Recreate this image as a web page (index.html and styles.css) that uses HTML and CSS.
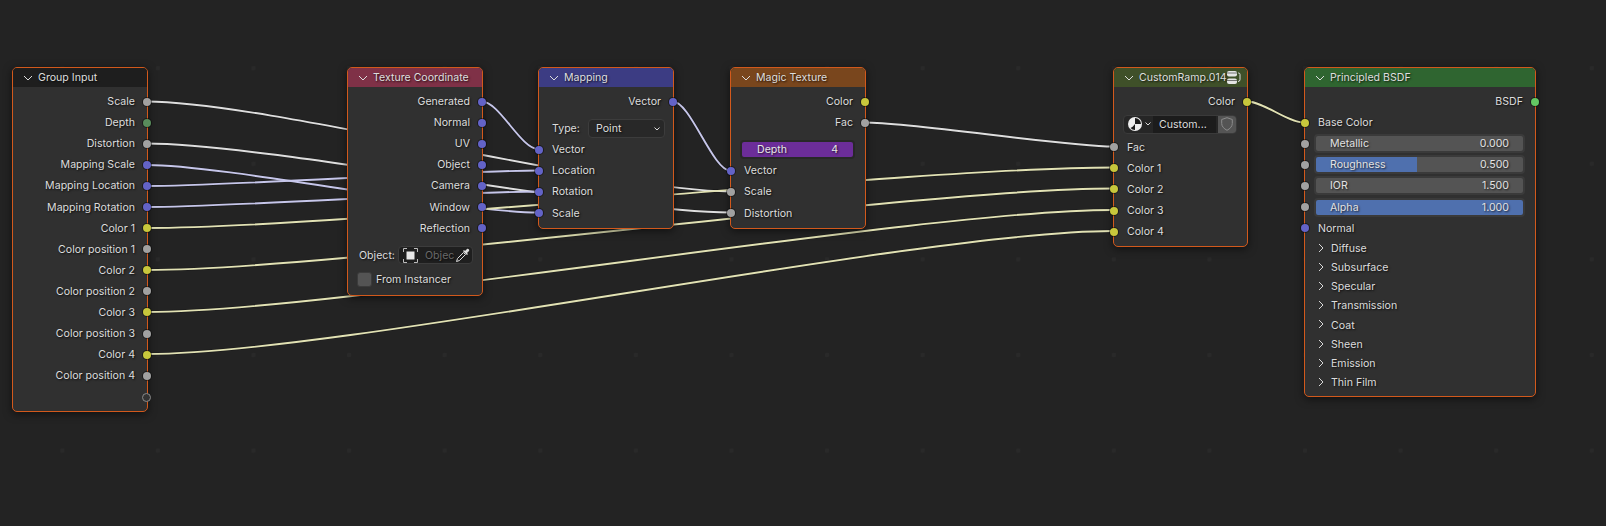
FILE: index.html
```html
<!DOCTYPE html>
<html>
<head>
    <title>Shader Nodes</title>
    <link rel="stylesheet" href="styles.css">
</head>
<body>
<div class="canvas">
    <svg class="wires" width="1606" height="526">
        <defs>
            <g id="wires-grey">
                <path d="M147 101.500C264 101.500 613 191.500 730 191.500"/>
                <path d="M147 143.500C264 143.500 613 212.500 730 212.500"/>
                <path d="M865 122.500C915 122.500 1063 146.500 1113 146.500"/>
            </g>
            <g id="wires-vector">
                <path d="M147 165C225 165 460 212.500 538 212.500"/>
                <path d="M147 186C225 186 460 170.500 538 170.500"/>
                <path d="M147 207C225 207 460 191.500 538 191.500"/>
                <path d="M482 101.500C499 101.500 521 149 538 149"/>
                <path d="M673 101.500C690 101.500 713 170.500 730 170.500"/>
            </g>
            <g id="wires-color">
                <path d="M147 228C340 228 920 167.500 1113 167.500"/>
                <path d="M147 270C340 270 920 188.500 1113 188.500"/>
                <path d="M147 312C340 312 920 210 1113 210"/>
                <path d="M147 354C340 354 920 231 1113 231"/>
                <path d="M1247 101.500C1264 101.500 1287 122.500 1304 122.500"/>
            </g>
        </defs>
        <use href="#wires-grey" class="wire-edge"/>
        <use href="#wires-vector" class="wire-edge"/>
        <use href="#wires-color" class="wire-edge"/>
        <use href="#wires-grey" class="wire wire-grey"/>
        <use href="#wires-vector" class="wire wire-vector"/>
        <use href="#wires-color" class="wire wire-color"/>
    </svg>

    <!-- Group Input -->
    <div class="node node-group">
        <div class="node-head head-group">
            <svg class="chev" width="10" height="6" viewBox="0 0 10 6"><path d="M1 1l4 4 4-4"/></svg>
            <span>Group Input</span>
        </div>
        <div class="node-body">
            <div class="row out">Scale<i class="sock grey"></i></div>
            <div class="row out">Depth<i class="sock green-dim"></i></div>
            <div class="row out">Distortion<i class="sock grey"></i></div>
            <div class="row out">Mapping Scale<i class="sock blue"></i></div>
            <div class="row out">Mapping Location<i class="sock blue"></i></div>
            <div class="row out">Mapping Rotation<i class="sock blue"></i></div>
            <div class="row out">Color 1<i class="sock yellow"></i></div>
            <div class="row out">Color position 1<i class="sock grey"></i></div>
            <div class="row out">Color 2<i class="sock yellow"></i></div>
            <div class="row out">Color position 2<i class="sock grey"></i></div>
            <div class="row out">Color 3<i class="sock yellow"></i></div>
            <div class="row out">Color position 3<i class="sock grey"></i></div>
            <div class="row out">Color 4<i class="sock yellow"></i></div>
            <div class="row out">Color position 4<i class="sock grey"></i></div>
            <div class="row out"><i class="sock empty"></i></div>
        </div>
    </div>

    <!-- Texture Coordinate -->
    <div class="node node-texcoord">
        <div class="node-head head-texcoord">
            <svg class="chev" width="10" height="6" viewBox="0 0 10 6"><path d="M1 1l4 4 4-4"/></svg>
            <span>Texture Coordinate</span>
        </div>
        <div class="node-body">
            <div class="row out">Generated<i class="sock blue"></i></div>
            <div class="row out">Normal<i class="sock blue"></i></div>
            <div class="row out">UV<i class="sock blue"></i></div>
            <div class="row out">Object<i class="sock blue"></i></div>
            <div class="row out">Camera<i class="sock blue"></i></div>
            <div class="row out">Window<i class="sock blue"></i></div>
            <div class="row out">Reflection<i class="sock blue"></i></div>
            <div class="row object-row">
                <span>Object:</span>
                <div class="object-field">
                    <svg class="object-icon" width="15" height="15" viewBox="0 0 15 15">
                        <rect x="3.500" y="3.500" width="8" height="8" fill="#e8e8e8"/>
                        <path d="M.5 4V.5H4M11 .5h3.500V4M14.500 11v3.500H11M4 14.500H.5V11" fill="none" stroke="#bbb"/>
                    </svg>
                    <span class="object-name">Objec</span>
                    <svg class="dropper" width="16" height="16" viewBox="0 0 16 16">
                        <path d="M1.500 14.500l1-3 6-6 2 2-6 6z" fill="none" stroke="#ddd"/>
                        <path d="M8 4l4 4 1-1-1-1 2-2c1-1-1-3-2-2l-2 2-1-1z" fill="#ddd"/>
                    </svg>
                </div>
            </div>
            <div class="row check-row"><i class="check"></i>From Instancer</div>
        </div>
    </div>

    <!-- Mapping -->
    <div class="node node-mapping">
        <div class="node-head head-mapping">
            <svg class="chev" width="10" height="6" viewBox="0 0 10 6"><path d="M1 1l4 4 4-4"/></svg>
            <span>Mapping</span>
        </div>
        <div class="node-body">
            <div class="row out">Vector<i class="sock blue"></i></div>
            <div class="row type-row">
                <span>Type:</span>
                <div class="select">
                    <span>Point</span>
                    <svg class="mini-chev" width="6" height="4" viewBox="0 0 6 4"><path d="M.5 .5L3 3 5.500 .5"/></svg>
                </div>
            </div>
            <div class="row in"><i class="sock blue"></i>Vector</div>
            <div class="row in"><i class="sock blue"></i>Location</div>
            <div class="row in"><i class="sock blue"></i>Rotation</div>
            <div class="row in"><i class="sock blue"></i>Scale</div>
        </div>
    </div>

    <!-- Magic Texture -->
    <div class="node node-magic">
        <div class="node-head head-magic">
            <svg class="chev" width="10" height="6" viewBox="0 0 10 6"><path d="M1 1l4 4 4-4"/></svg>
            <span>Magic Texture</span>
        </div>
        <div class="node-body">
            <div class="row out">Color<i class="sock yellow"></i></div>
            <div class="row out">Fac<i class="sock grey"></i></div>
            <div class="row depth-row">
                <div class="depth"><span>Depth</span><span>4</span></div>
            </div>
            <div class="row in"><i class="sock blue"></i>Vector</div>
            <div class="row in"><i class="sock grey"></i>Scale</div>
            <div class="row in"><i class="sock grey"></i>Distortion</div>
        </div>
    </div>

    <!-- CustomRamp group -->
    <div class="node node-ramp">
        <div class="node-head head-ramp">
            <svg class="chev" width="10" height="6" viewBox="0 0 10 6"><path d="M1 1l4 4 4-4"/></svg>
            <span>CustomRamp.014</span>
            <svg class="users-icon" width="15" height="15" viewBox="0 0 15 15">
                <rect x="1" y="1" width="10" height="5.500" rx="2" fill="#e4e4e4"/>
                <path d="M1 3h10" stroke="#555" stroke-width=".8"/>
                <rect x="1" y="8.500" width="10" height="5.500" rx="2" fill="#e4e4e4"/>
                <path d="M1 10.500h10" stroke="#555" stroke-width=".8"/>
                <path d="M12 3h.5a1.500 1.500 0 0 1 1.500 1.500v5a2 2 0 0 1-2 2" fill="none" stroke="#ddd"/>
            </svg>
        </div>
        <div class="node-body">
            <div class="row out">Color<i class="sock yellow"></i></div>
            <div class="row datablock-row">
                <div class="datablock">
                    <div class="datablock-mat">
                        <svg width="14" height="14" viewBox="0 0 14 14">
                            <circle cx="7" cy="7" r="7" fill="#eee"/>
                            <path d="M7 1a6 6 0 0 1 6 6H7zM7 7v6a6 6 0 0 1-4.500-2c2-1 3-2 4.500-4z" fill="#1c1c1c"/>
                        </svg>
                        <svg class="mini-chev" width="6" height="4" viewBox="0 0 6 4"><path d="M.5 .5L3 3 5.500 .5"/></svg>
                    </div>
                    <div class="datablock-name">Custom...</div>
                    <div class="datablock-shield">
                        <svg width="12" height="14" viewBox="0 0 12 14"><path d="M6 .7l5.300 1.800v4c0 3-2.300 5.200-5.300 6.800C3 11.700.7 9.500.7 6.500v-4z" fill="none" stroke="#8c8c8c"/></svg>
                    </div>
                </div>
            </div>
            <div class="row in fac-row"><i class="sock grey"></i>Fac</div>
            <div class="row in"><i class="sock yellow"></i>Color 1</div>
            <div class="row in"><i class="sock yellow"></i>Color 2</div>
            <div class="row in"><i class="sock yellow"></i>Color 3</div>
            <div class="row in"><i class="sock yellow"></i>Color 4</div>
        </div>
    </div>

    <!-- Principled BSDF -->
    <div class="node node-bsdf">
        <div class="node-head head-bsdf">
            <svg class="chev" width="10" height="6" viewBox="0 0 10 6"><path d="M1 1l4 4 4-4"/></svg>
            <span>Principled BSDF</span>
        </div>
        <div class="node-body">
            <div class="row out">BSDF<i class="sock green"></i></div>
            <div class="row in"><i class="sock yellow"></i>Base Color</div>
            <div class="row slider-row"><i class="sock grey"></i>
                <div class="slider"><span>Metallic</span><span>0.000</span></div>
            </div>
            <div class="row slider-row"><i class="sock grey"></i>
                <div class="slider half"><span>Roughness</span><span>0.500</span></div>
            </div>
            <div class="row slider-row"><i class="sock grey"></i>
                <div class="slider"><span>IOR</span><span>1.500</span></div>
            </div>
            <div class="row slider-row"><i class="sock grey"></i>
                <div class="slider full"><span>Alpha</span><span>1.000</span></div>
            </div>
            <div class="row in"><i class="sock blue"></i>Normal</div>
            <div class="panel"><svg class="panel-chev" width="6" height="10" viewBox="0 0 6 10"><path d="M1 1l4 4-4 4"/></svg>Diffuse</div>
            <div class="panel"><svg class="panel-chev" width="6" height="10" viewBox="0 0 6 10"><path d="M1 1l4 4-4 4"/></svg>Subsurface</div>
            <div class="panel"><svg class="panel-chev" width="6" height="10" viewBox="0 0 6 10"><path d="M1 1l4 4-4 4"/></svg>Specular</div>
            <div class="panel"><svg class="panel-chev" width="6" height="10" viewBox="0 0 6 10"><path d="M1 1l4 4-4 4"/></svg>Transmission</div>
            <div class="panel"><svg class="panel-chev" width="6" height="10" viewBox="0 0 6 10"><path d="M1 1l4 4-4 4"/></svg>Coat</div>
            <div class="panel"><svg class="panel-chev" width="6" height="10" viewBox="0 0 6 10"><path d="M1 1l4 4-4 4"/></svg>Sheen</div>
            <div class="panel"><svg class="panel-chev" width="6" height="10" viewBox="0 0 6 10"><path d="M1 1l4 4-4 4"/></svg>Emission</div>
            <div class="panel"><svg class="panel-chev" width="6" height="10" viewBox="0 0 6 10"><path d="M1 1l4 4-4 4"/></svg>Thin Film</div>
        </div>
    </div>
</div>
</body>
</html>
```

FILE: styles.css
```css
html, body {
    margin: 0;
    padding: 0;
    height: 100%;
    overflow: hidden;
}
body {
    background-color: #232323;
    font-family: Inter, "Liberation Sans", sans-serif;
    font-size: 10.6px;
    color: #dcdcdc;
}
.canvas {
    position: relative;
    width: 1606px;
    height: 526px;
    background-color: #232323;
    background-image: radial-gradient(circle at center, #292929 0, #292929 2px, transparent 2.6px);
    background-size: 95.6px 95.6px;
    background-position: 14.5px 20.4px;
    overflow: hidden;
}

/* wires */
.wires {
    position: absolute;
    left: 0;
    top: 0;
}
.wire-edge {
    fill: none;
    stroke: #151515;
    stroke-width: 3.2;
    stroke-opacity: .55;
}
.wire {
    fill: none;
    stroke-width: 1.9;
}
.wire-grey { stroke: #dedede; }
.wire-vector { stroke: #c6c6ea; }
.wire-color { stroke: #e2e2b4; }

/* nodes */
.node {
    position: absolute;
    top: 67px;
    box-sizing: border-box;
    width: 136px;
    background: #303030;
    border: 1px solid #d2591c;
    border-radius: 5px;
    box-shadow: 0 2px 9px rgba(0, 0, 0, .55);
    text-shadow: 1px 1px 2px rgba(0, 0, 0, .75);
}
.node-group { left: 12px; }
.node-texcoord { left: 347px; }
.node-mapping { left: 538px; }
.node-magic { left: 730px; }
.node-ramp { left: 1113px; width: 135px; }
.node-bsdf { left: 1304px; width: 232px; }

.node-head {
    position: relative;
    display: flex;
    align-items: center;
    height: 19px;
    padding-left: 10px;
    border-radius: 4px 4px 0 0;
    color: #dedede;
}
.node-head span {
    margin-left: 5px;
    white-space: nowrap;
}
.head-group { background: #1e1e1e; }
.head-texcoord { background: #7f3147; }
.head-mapping { background: #3c3c83; }
.head-magic { background: #79461d; }
.head-ramp { background: #3f5029; }
.head-bsdf { background: #2f6530; }

.chev {
    fill: none;
    stroke: #dcdcdc;
    stroke-width: 1;
}
.mini-chev {
    fill: none;
    stroke: #dcdcdc;
    stroke-width: 1;
}
.users-icon {
    position: absolute;
    right: 6px;
    top: 2px;
}

.node-body {
    padding: 4px 0;
}
.row {
    position: relative;
    display: flex;
    align-items: center;
    height: 21.1px;
    white-space: nowrap;
}
.row.out {
    justify-content: flex-end;
    padding-right: 12px;
}
.row.in {
    padding-left: 13px;
}

/* sockets */
.sock {
    position: absolute;
    top: 50%;
    width: 8px;
    height: 8px;
    margin-top: -4px;
    border-radius: 50%;
    box-shadow: 0 0 0 1px rgba(0, 0, 0, .45);
}
.out .sock { right: -3.5px; }
.in .sock,
.slider-row .sock { left: -4.5px; }
.sock.grey { background: #a1a1a1; }
.sock.blue { background: #6363c7; }
.sock.yellow { background: #c7c73c; }
.sock.green { background: #63c763; }
.sock.green-dim { background: #598c5c; }
.sock.empty {
    box-sizing: border-box;
    background: #333;
    border: 1px solid #8a8a8a;
    width: 9px;
    height: 9px;
    box-shadow: none;
}

/* Texture Coordinate widgets */
.object-row {
    margin-top: 6px;
    padding: 0 9px 0 11px;
}
.object-field {
    display: flex;
    align-items: center;
    box-sizing: border-box;
    width: 75px;
    height: 18px;
    margin-left: auto;
    padding-left: 4px;
    background: #1f1f1f;
    border: 1px solid #3c3c3c;
    border-radius: 4px;
}
.object-name {
    margin-left: 7px;
    width: 30px;
    color: #696969;
}
.dropper {
    flex: none;
}
.check-row {
    margin: 3px 0 1.5px;
    padding-left: 9px;
}
.check {
    box-sizing: border-box;
    width: 15px;
    height: 15px;
    margin-right: 4px;
    background: #545454;
    border: 1px solid #3b3b3b;
    border-radius: 3px;
}

/* Mapping widgets */
.type-row {
    margin-top: 6px;
    padding-left: 13px;
}
.select {
    display: flex;
    align-items: center;
    justify-content: space-between;
    box-sizing: border-box;
    width: 77px;
    height: 19px;
    margin-left: auto;
    margin-right: 8px;
    padding: 0 4px 0 7px;
    background: #282828;
    border: 1px solid #3c3c3c;
    border-radius: 4px;
}

/* Magic Texture widgets */
.depth-row {
    margin-top: 6px;
    padding: 0 9px;
}
.depth {
    display: flex;
    justify-content: space-between;
    align-items: center;
    box-sizing: border-box;
    width: 115px;
    height: 19px;
    padding: 0 15px;
    background: #6c2d99;
    border: 2px solid #282828;
    border-radius: 4px;
    color: #e6e6e6;
}

/* group datablock */
.datablock-row {
    margin-top: 1.5px;
    padding-left: 9px;
}
.datablock {
    display: flex;
    align-items: stretch;
    box-sizing: border-box;
    width: 114px;
    height: 19px;
    background: #262626;
    border: 1px solid #3a3a3a;
    border-radius: 4px;
}
.datablock-mat {
    display: flex;
    align-items: center;
    justify-content: space-between;
    width: 29px;
    padding: 0 2px 0 4px;
    box-sizing: border-box;
}
.datablock-name {
    display: flex;
    align-items: center;
    width: 63px;
    padding-left: 6px;
    box-sizing: border-box;
    background: #1c1c1c;
}
.datablock-shield {
    display: flex;
    align-items: center;
    justify-content: center;
    width: 18px;
    margin-left: 2px;
    background: #545454;
    border-radius: 0 3px 3px 0;
}
.fac-row {
    margin-top: 2px;
}

/* Principled widgets */
.slider-row {
    padding-left: 9px;
}
.slider {
    display: flex;
    justify-content: space-between;
    align-items: center;
    box-sizing: border-box;
    width: 211px;
    height: 19px;
    padding: 0 14px;
    background-color: #545454;
    border: 2px solid #3a3a3a;
    border-radius: 4px;
    color: #e2e2e2;
}
.slider.half {
    background-image: linear-gradient(#4f70ae, #4f70ae);
    background-repeat: no-repeat;
    background-size: 49% 100%;
}
.slider.full {
    background-color: #4f70ae;
}
.panel {
    position: relative;
    display: flex;
    align-items: center;
    height: 19.2px;
    padding-left: 26px;
}
.panel-chev {
    position: absolute;
    left: 13px;
    top: 4px;
    fill: none;
    stroke: #d8d8d8;
    stroke-width: 1;
}
```
